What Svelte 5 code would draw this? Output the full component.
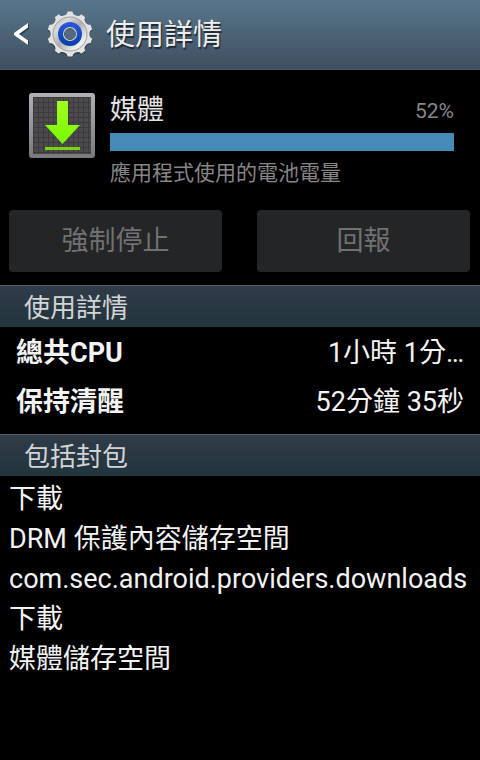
<script>
  const usage = [
    ['總共CPU', '1小時 1分…'],
    ['保持清醒', '52分鐘 35秒'],
  ]

  const packages = [
    '下載',
    'DRM 保護內容儲存空間',
    'com.sec.android.providers.downloads',
    '下載',
    '媒體儲存空間',
  ]

  const percent = 52
  const teeth = Array.from({ length: 10 }, (_, i) => i * 36)
</script>

<div class="screen">
  <header>
    <button class="back" type="button" aria-label="返回">
      <svg width="16" height="26" viewBox="0 0 16 26">
        <path d="M15 3V8L7 14L15 20V25L1 14Z" fill="#1c2730" opacity="0.6" />
        <path d="M14 2V6.500L5 13L14 19.500V24L0 14V12Z" fill="#fff" />
      </svg>
    </button>
    <svg class="gear" width="48" height="48" viewBox="0 0 48 48" aria-hidden="true">
      <defs>
        <linearGradient id="metal" x1="0" y1="0" x2="1" y2="1">
          <stop offset="0" stop-color="#b8b8b8" />
          <stop offset="0.25" stop-color="#d8d8d8" />
          <stop offset="0.5" stop-color="#b0b0b0" />
          <stop offset="0.8" stop-color="#f2f2f2" />
          <stop offset="1" stop-color="#c8c8c8" />
        </linearGradient>
        <linearGradient id="blue" x1="0" y1="0" x2="0" y2="1">
          <stop offset="0" stop-color="#2c58dc" />
          <stop offset="1" stop-color="#0440a8" />
        </linearGradient>
      </defs>
      <g fill="#25303a" opacity="0.6" transform="translate(0 1)">
        <circle cx="24" cy="24" r="20" />
        {#each teeth as angle}
          <path d="M19 6L21.500 1.500H26.500L29 6Z" transform="rotate({angle} 24 24)" />
        {/each}
      </g>
      <g fill="#e2e2e2">
        <circle cx="24" cy="24" r="19.500" />
        {#each teeth as angle}
          <path d="M18.500 6L21 3.500L21.500 1.500H26.500L27 3.500L29.500 6Z" transform="rotate({angle} 24 24)" />
        {/each}
      </g>
      <circle cx="24" cy="24" r="17" fill="url(#metal)" stroke="#a0a0a0" />
      <circle cx="24" cy="24" r="12" fill="url(#blue)" />
      <circle cx="24" cy="24" r="7" fill="#d8d8d8" />
      <circle cx="24" cy="24" r="5.500" fill="#536b80" stroke="#55585c" />
    </svg>
    <h1>使用詳情</h1>
  </header>

  <main>
    <section class="summary">
      <svg class="app-icon" width="66" height="66" viewBox="0 0 66 66" aria-hidden="true">
        <defs>
          <linearGradient id="frame" x1="0" y1="0" x2="0" y2="1">
            <stop offset="0" stop-color="#b0b1b5" />
            <stop offset="1" stop-color="#78797b" />
          </linearGradient>
          <linearGradient id="arrow" x1="0" y1="0" x2="0" y2="1">
            <stop offset="0" stop-color="#a0ff20" />
            <stop offset="1" stop-color="#78f800" />
          </linearGradient>
          <pattern id="mesh" width="5" height="5" patternUnits="userSpaceOnUse">
            <rect width="5" height="5" fill="#4c4a4d" />
            <path d="M0 4.500H5M4.500 0V5" stroke="#3b393c" />
          </pattern>
        </defs>
        <rect width="66" height="65" rx="3" fill="url(#frame)" />
        <rect x="4" y="4" width="58" height="57" fill="url(#mesh)" />
        <path d="M28 8H39V32H51L33.500 51L16 32H28Z" fill="url(#arrow)" />
        <rect x="16" y="54" width="35" height="3" fill="#76d80c" />
      </svg>
      <div class="details">
        <div class="name">
          <h2>媒體</h2>
          <span>{percent}%</span>
        </div>
        <div class="bar"></div>
        <p>應用程式使用的電池電量</p>
      </div>
    </section>

    <div class="actions">
      <button type="button" disabled>強制停止</button>
      <button type="button" disabled>回報</button>
    </div>

    <section>
      <h3>使用詳情</h3>
      <dl>
        {#each usage as [label, value]}
          <div>
            <dt>{label}</dt>
            <dd>{value}</dd>
          </div>
        {/each}
      </dl>
    </section>

    <section>
      <h3>包括封包</h3>
      <ul>
        {#each packages as name}
          <li>{name}</li>
        {/each}
      </ul>
    </section>
  </main>
</div>

<style>
  :global(body) {
    margin: 0;
    background: #000;
  }

  .screen {
    min-height: 100vh;
    background: #000;
    color: #f3f3f3;
    font-family: Roboto, 'Noto Sans CJK TC', sans-serif;
    font-size: 27px;
  }

  h1,
  h2,
  h3,
  p,
  dl,
  dd,
  ul {
    margin: 0;
    padding: 0;
    font-weight: 400;
  }

  header {
    display: flex;
    align-items: center;
    box-sizing: border-box;
    height: 70px;
    padding: 0 14px 2px;
    border-bottom: 1px solid #4a5d6c;
    background: linear-gradient(#59768c, #3e4f5f);
  }

  .back {
    display: flex;
    padding: 0;
    border: 0;
    background: none;
  }

  .gear {
    margin: 0 12px 0 16px;
  }

  h1 {
    padding-top: 2px;
    color: #ededed;
    font-size: 29px;
    line-height: 40px;
    text-shadow: 1px 2px 1px #1c2730;
  }

  .summary {
    display: flex;
    gap: 15px;
    padding: 23px 26px 0 29px;
  }

  .app-icon {
    flex: none;
  }

  .details {
    flex: 1;
  }

  .name {
    display: flex;
    justify-content: space-between;
    align-items: center;
    height: 40px;
    padding-bottom: 0;
  }

  h2 {
    padding-bottom: 6px;
    color: #e4e4e4;
    font-size: 27px;
    line-height: 32px;
  }

  .name span,
  .summary p {
    color: #868686;
    font-size: 21px;
    line-height: 24px;
  }

  .name span {
    padding-bottom: 4px;
  }

  .bar {
    height: 18px;
    background: #468ab8;
  }

  .summary p {
    margin-top: 10px;
  }

  .actions {
    display: grid;
    grid-template-columns: 1fr 1fr;
    gap: 35px;
    padding: 25px 10px 13px 9px;
  }

  .actions button {
    height: 62px;
    padding: 0 0 6px;
    border: 0;
    border-radius: 4px;
    background: #242527;
    color: #717173;
    font: inherit;
  }

  h3 {
    box-sizing: border-box;
    height: 42px;
    padding-left: 24px;
    border-top: 1px solid #52616d;
    background: linear-gradient(#303c49, #22343c);
    color: #d2d4d6;
    font-size: 26px;
    line-height: 44px;
  }

  dl {
    padding: 2px 0 7px;
  }

  dl div {
    display: flex;
    justify-content: space-between;
    padding: 0 16px;
    line-height: 49px;
  }

  dt {
    font-weight: 700;
  }

  ul {
    padding: 3px 9px;
    list-style: none;
    line-height: 40px;
  }
</style>
